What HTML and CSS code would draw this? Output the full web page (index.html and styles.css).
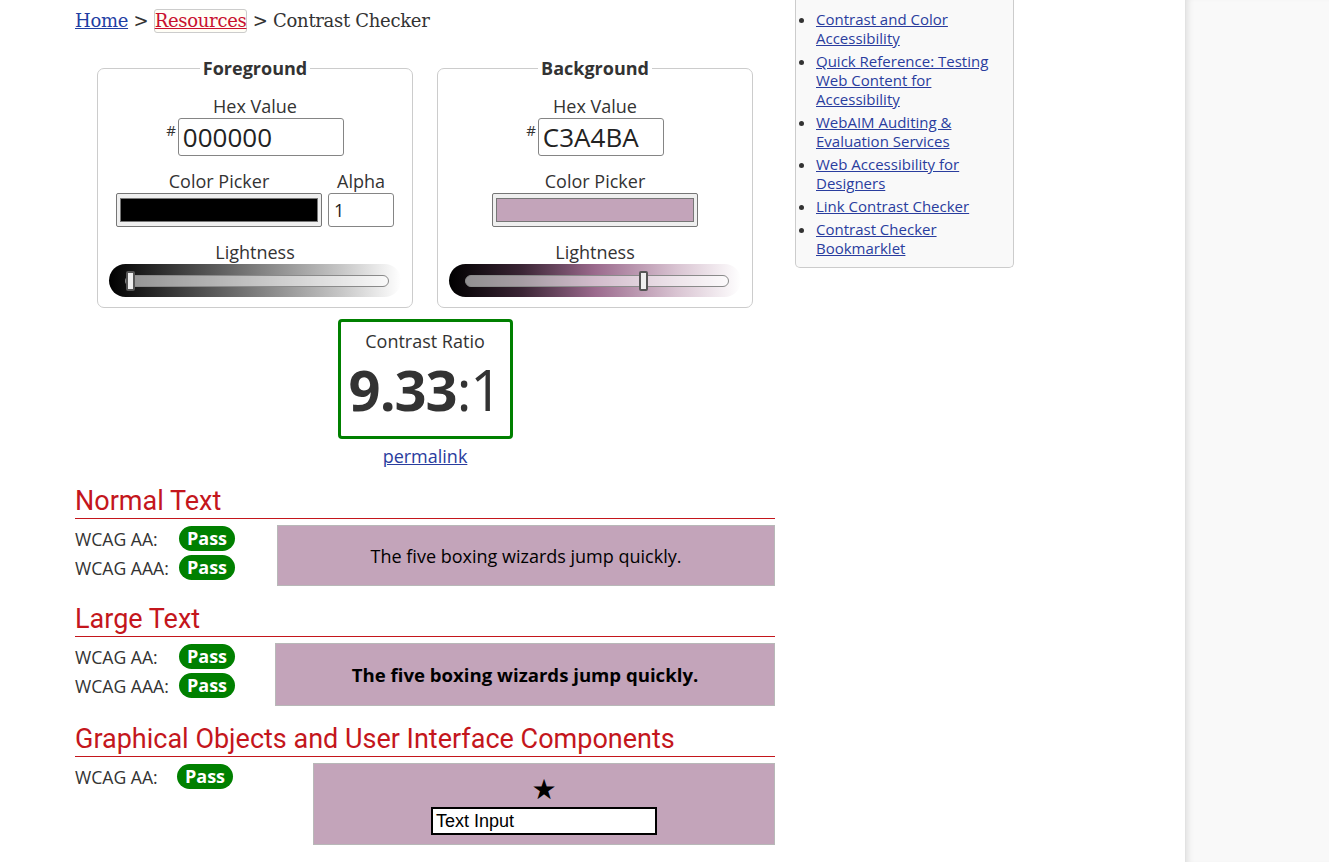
FILE: index.html
```html
<!DOCTYPE html>
<html lang="en">
<head>
<meta charset="utf-8">
<title>Contrast Checker</title>
<link rel="stylesheet" href="styles.css">
</head>
<body>
<div class="page">
  <div class="content">
    <main class="main">
      <nav class="crumbs"><a href="#" class="crumb-home">Home</a> &gt; <a href="#" class="crumb-res">Resources</a> &gt; Contrast Checker</nav>

      <div class="pickers">
        <fieldset class="colorset">
          <legend>Foreground</legend>
          <div class="field">
            <label class="lbl">Hex Value</label>
            <div class="hexrow"><span class="hash">#</span><div class="hexinput hex-fg">000000</div></div>
          </div>
          <div class="pickrow">
            <div class="field">
              <label class="lbl">Color Picker</label>
              <div class="swatchbox"><div class="swatch swatch-fg"></div></div>
            </div>
            <div class="field">
              <label class="lbl">Alpha</label>
              <div class="alpha">1</div>
            </div>
          </div>
          <div class="field">
            <label class="lbl">Lightness</label>
            <div class="slider slider-fg">
              <div class="track"><div class="thumb" style="left:0%"></div></div>
            </div>
          </div>
        </fieldset>

        <fieldset class="colorset">
          <legend>Background</legend>
          <div class="field">
            <label class="lbl">Hex Value</label>
            <div class="hexrow"><span class="hash">#</span><div class="hexinput hex-bg">C3A4BA</div></div>
          </div>
          <div class="pickrow">
            <div class="field">
              <label class="lbl">Color Picker</label>
              <div class="swatchbox"><div class="swatch swatch-bg"></div></div>
            </div>
          </div>
          <div class="field">
            <label class="lbl">Lightness</label>
            <div class="slider slider-bg">
              <div class="track"><div class="thumb" style="left:66%"></div></div>
            </div>
          </div>
        </fieldset>
      </div>

      <div class="ratio-wrap">
        <div class="ratio">
          <div class="ratio-label">Contrast Ratio</div>
          <div class="ratio-value"><b>9.33</b>:1</div>
        </div>
        <a href="#" class="permalink">permalink</a>
      </div>

      <section class="result">
        <h2>Normal Text</h2>
        <div class="result-row">
          <div class="grades">
            <div class="grade"><span class="glabel">WCAG AA:</span><span class="pass">Pass</span></div>
            <div class="grade"><span class="glabel">WCAG AAA:</span><span class="pass">Pass</span></div>
          </div>
          <div class="sample sample-normal">The five boxing wizards jump quickly.</div>
        </div>
      </section>

      <section class="result">
        <h2>Large Text</h2>
        <div class="result-row">
          <div class="grades">
            <div class="grade"><span class="glabel">WCAG AA:</span><span class="pass">Pass</span></div>
            <div class="grade"><span class="glabel">WCAG AAA:</span><span class="pass">Pass</span></div>
          </div>
          <div class="sample sample-large">The five boxing wizards jump quickly.</div>
        </div>
      </section>

      <section class="result">
        <h2>Graphical Objects and User Interface Components</h2>
        <div class="result-row">
          <div class="grades grades-ui">
            <div class="grade"><span class="glabel glabel-ui">WCAG AA:</span><span class="pass">Pass</span></div>
          </div>
          <div class="sample sample-ui">
            <span class="star">★</span>
            <div class="textinput">Text Input</div>
          </div>
        </div>
      </section>
    </main>

    <aside class="sidebar">
      <ul>
        <li><a href="#">Contrast and Color Accessibility</a></li>
        <li><a href="#">Quick Reference: Testing Web Content for Accessibility</a></li>
        <li><a href="#">WebAIM Auditing &amp; Evaluation Services</a></li>
        <li><a href="#">Web Accessibility for Designers</a></li>
        <li><a href="#">Link Contrast Checker</a></li>
        <li><a href="#">Contrast Checker Bookmarklet</a></li>
      </ul>
    </aside>
  </div>
  <div class="rightpanel"></div>
</div>
</body>
</html>
```

FILE: styles.css
```css
html, body {
  margin: 0;
  padding: 0;
  height: 100%;
  overflow: hidden;
  background: #fff;
}
body {
  font-family: "Open Sans", "DejaVu Sans", sans-serif;
  color: #333;
  font-size: 18px;
}
a { color: #2a3d9e; }

.page {
  display: flex;
  min-height: 100%;
}
.content {
  width: 1185px;
  flex: none;
  display: flex;
  align-items: flex-start;
}
.main {
  width: 700px;
  padding-left: 75px;
  flex: none;
}

/* breadcrumbs */
.crumbs {
  font-family: "DejaVu Serif", "Liberation Serif", serif;
  font-size: 18px;
  color: #333;
  padding-top: 9px;
  line-height: 24px;
  height: 48px;
  letter-spacing: -0.3px;
}
.crumb-home { color: #1f3ea3; }
.crumb-res {
  color: #c8102e;
  background: #fffef6;
  border: 1px solid #ccc;
  border-radius: 3px;
  padding: 0 0 1px;
}

/* pickers */
.pickers {
  display: flex;
  justify-content: center;
  gap: 24px;
}
.colorset {
  width: 316px;
  box-sizing: border-box;
  margin: 0;
  padding: 14px 10px 10px;
  border: 1px solid #ccc;
  border-radius: 7px;
  display: flex;
  flex-direction: column;
  align-items: center;
}
.colorset legend {
  margin: 0 auto;
  padding: 0 3px;
  font-weight: 700;
  font-size: 18px;
  line-height: 23px;
  color: #333;
}
.field {
  display: flex;
  flex-direction: column;
  align-items: center;
}
.field + .field, .pickrow, .pickrow + .field { margin-top: 13px; }
.pickrow .field { margin-top: 0; }
.lbl {
  font-size: 18px;
  line-height: 24px;
  color: #333;
}
.hexrow {
  display: flex;
  align-items: flex-start;
}
.hash {
  font-size: 15px;
  line-height: 15px;
  margin-top: 5px;
  margin-right: 2px;
}
.hexinput {
  box-sizing: border-box;
  height: 38px;
  border: 1px solid #858585;
  border-radius: 3px;
  font-size: 26px;
  line-height: 36px;
  padding-left: 4px;
  color: #222;
}
.hex-fg { width: 166px; }
.hex-bg { width: 126px; }

.pickrow {
  display: flex;
  gap: 6px;
}
.swatchbox {
  box-sizing: border-box;
  width: 206px;
  height: 34px;
  border: 1px solid #767676;
  border-radius: 2px;
  background: #efefef;
  padding: 4px 3px;
}
.swatch {
  height: 100%;
  box-sizing: border-box;
  border: 1px solid #777;
}
.swatch-fg { background: #000; }
.swatch-bg { background: #c3a4ba; }
.alpha {
  box-sizing: border-box;
  width: 66px;
  height: 34px;
  border: 1px solid #858585;
  border-radius: 3px;
  font-size: 18px;
  line-height: 32px;
  padding-left: 5px;
  color: #222;
}

.slider {
  width: 292px;
  height: 33px;
  border-radius: 17px;
  box-sizing: border-box;
  padding: 11px 12px 0 16px;
}
.slider-fg {
  background: linear-gradient(to right, #000 0%, #1a1a1a 10%, #707070 45%, #c8c8c8 80%, #fff 100%);
}
.slider-bg {
  background: linear-gradient(to right, #000 0%, #3b2535 25%, #9b6a8d 50%, #d9c4d2 78%, #fff 100%);
}
.track {
  position: relative;
  height: 12px;
  box-sizing: border-box;
  border: 1px solid #8a8a8a;
  border-radius: 6px;
  background: rgba(255, 255, 255, 0.55);
}
.thumb {
  position: absolute;
  top: -5px;
  width: 9px;
  height: 20px;
  box-sizing: border-box;
  background: #eee;
  border: 2px solid #555;
  border-radius: 2px;
}

/* ratio */
.ratio-wrap {
  display: flex;
  flex-direction: column;
  align-items: center;
  margin-top: 11px;
}
.ratio {
  box-sizing: border-box;
  width: 175px;
  height: 120px;
  border: 3px solid #008000;
  border-radius: 4px;
  text-align: center;
  padding-top: 7px;
}
.ratio-label {
  font-size: 18px;
  line-height: 24px;
  color: #333;
}
.ratio-value {
  font-size: 56px;
  line-height: 56px;
  margin-top: 8px;
  color: #333;
  letter-spacing: -1px;
}
.ratio-value b { font-weight: 700; }
.permalink {
  font-size: 18px;
  line-height: 23px;
  margin-top: 6px;
}

/* results */
.result h2 {
  font-family: Roboto, "Liberation Sans", sans-serif;
  font-weight: 400;
  font-size: 27px;
  line-height: 30px;
  color: #c4161c;
  margin: 18px 0 0;
  padding-bottom: 2px;
  border-bottom: 1px solid #c4161c;
}
.result-row {
  display: flex;
  margin-top: 6px;
  align-items: flex-start;
}
.grades {
  width: 202px;
  flex: none;
  display: flex;
  flex-direction: column;
  gap: 4px;
  padding-top: 1px;
}
.grades-ui { width: 238px; }
.grade {
  display: flex;
  align-items: center;
  height: 25px;
}
.glabel {
  width: 104px;
  flex: none;
  font-size: 17.6px;
  color: #333;
}
.glabel-ui { width: 102px; }
.pass {
  background: #008000;
  color: #fff;
  font-weight: 700;
  font-size: 18px;
  line-height: 25px;
  height: 25px;
  padding: 0 8px;
  border-radius: 13px;
}
.sample {
  flex: 1;
  background: #c3a4ba;
  border: 1px solid #b8b8b8;
  color: #000;
  display: flex;
  align-items: center;
  justify-content: center;
}
.sample-normal {
  height: 61px;
  box-sizing: border-box;
  font-size: 18px;
}
.sample-large {
  height: 63px;
  box-sizing: border-box;
  font-size: 18.6px;
  font-weight: 700;
  margin-left: -2px;
}
.sample-ui {
  height: 82px;
  box-sizing: border-box;
  flex-direction: column;
  padding-top: 2px;
}
.star {
  font-family: "DejaVu Sans", sans-serif;
  font-size: 28px;
  line-height: 30px;
}
.textinput {
  box-sizing: border-box;
  width: 226px;
  height: 28px;
  border: 2px solid #000;
  background: #fff;
  font-family: "Liberation Sans", Arial, sans-serif;
  font-size: 18px;
  line-height: 24px;
  padding-left: 3px;
  margin-top: 2px;
}

/* sidebar */
.sidebar {
  margin-left: 20px;
  width: 219px;
  box-sizing: border-box;
  background: #f9f9f9;
  border: 1px solid #ccc;
  border-top: none;
  border-radius: 0 0 5px 5px;
  padding: 10px 8px 9px 0;
}
.sidebar ul {
  margin: 0;
  padding: 0 0 0 20px;
  width: 187px;
}
.sidebar li {
  font-size: 15px;
  line-height: 19px;
  margin-bottom: 4px;
  color: #333;
}
.sidebar li:last-child { margin-bottom: 0; }
.sidebar a { color: #2a3d9e; }

.rightpanel {
  flex: 1;
  background: #f9f9f9;
  border-left: 1px solid #e2e2e2;
  box-shadow: inset 6px 0 6px -4px rgba(0, 0, 0, 0.10);
}
```
